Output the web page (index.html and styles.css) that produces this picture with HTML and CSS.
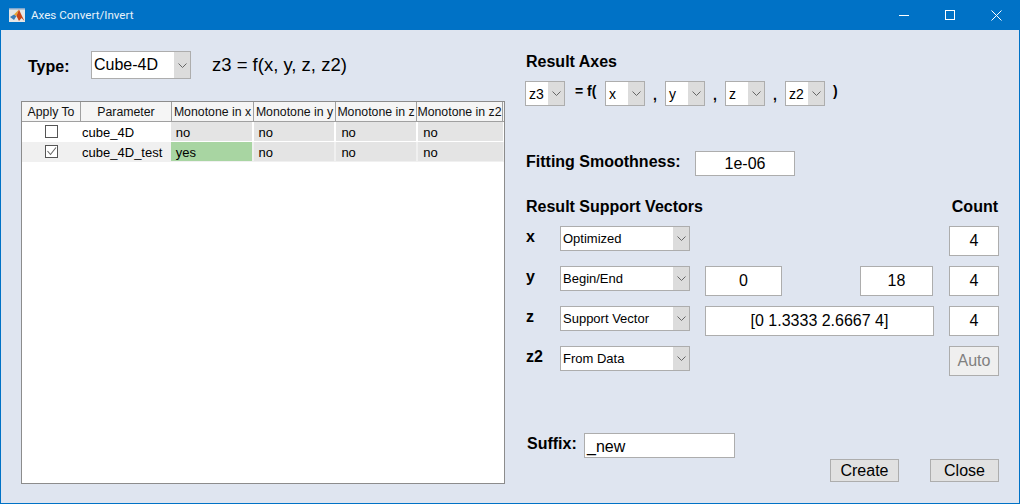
FILE: index.html
```html
<!DOCTYPE html>
<html lang="en">
<head>
    <meta charset="UTF-8">
    <title>Axes Convert/Invert</title>
    <link rel="stylesheet" href="styles.css">
</head>
<body>
    <svg class="defs" width="0" height="0">
        <symbol id="chev" viewBox="0 0 9 5">
            <path d="M0.5 0.5 L4.5 4.5 L8.5 0.5" fill="none" stroke="#666" stroke-width="1"/>
        </symbol>
    </svg>
    <div class="window">
        <div class="titlebar">
            <svg class="app-icon" width="16" height="14" viewBox="0 0 16 14">
                <rect x="0" y="0" width="16" height="14" fill="#e6e6e6"/>
                <rect x="0" y="0" width="16" height="1.5" fill="#7fa6cc"/>
                <path d="M1 9 L5 6.5 L7.5 8 L5 12 Z" fill="#3d7db8"/>
                <path d="M5 6.5 L7 4.5 L10 1.5 L7.5 8 Z" fill="#e9a52f"/>
                <path d="M10 1.5 L12 6 L15.5 13 L12.5 10 L10 13 L7.5 8 Z" fill="#c8471a"/>
            </svg>
            <span class="title-text">Axes Convert/Invert</span>
            <div class="win-btns">
                <svg width="11" height="11" viewBox="0 0 11 11"><path d="M0 5.5 H10" stroke="#fff" stroke-width="1"/></svg>
                <svg width="11" height="11" viewBox="0 0 11 11"><rect x="0.5" y="0.5" width="9" height="9" fill="none" stroke="#fff" stroke-width="1"/></svg>
                <svg width="11" height="11" viewBox="0 0 11 11"><path d="M0.5 0.5 L10.5 10.5 M10.5 0.5 L0.5 10.5" stroke="#fff" stroke-width="1"/></svg>
            </div>
        </div>

        <div class="content">
            <div class="left">
                <div class="type-row">
                    <span class="label-md type-label">Type:</span>
                    <div class="select type-select"><span>Cube-4D</span><i class="arrow"><svg width="9" height="5"><use href="#chev"/></svg></i></div>
                    <span class="formula">z3 = f(x, y, z, z2)</span>
                </div>

                <div class="table">
                    <div class="thead">
                        <div class="th col-apply">Apply To</div>
                        <div class="th col-param">Parameter</div>
                        <div class="th col-x">Monotone in x</div>
                        <div class="th col-y">Monotone in y</div>
                        <div class="th col-z">Monotone in z</div>
                        <div class="th col-z2">Monotone in z2</div>
                    </div>
                    <div class="tr">
                        <div class="td col-apply"><span class="check"></span></div>
                        <div class="td col-param">cube_4D</div>
                        <div class="td cell col-x">no</div>
                        <div class="td cell col-y">no</div>
                        <div class="td cell col-z">no</div>
                        <div class="td cell col-z2">no</div>
                    </div>
                    <div class="tr alt">
                        <div class="td col-apply"><span class="check"><svg width="13" height="13" viewBox="0 0 13 13"><path d="M2.5 6 L5.5 9.5 L11 2.5" fill="none" stroke="#666" stroke-width="1.1"/></svg></span></div>
                        <div class="td col-param">cube_4D_test</div>
                        <div class="td cell yes col-x">yes</div>
                        <div class="td cell col-y">no</div>
                        <div class="td cell col-z">no</div>
                        <div class="td cell col-z2">no</div>
                    </div>
                </div>
            </div>

            <div class="right">
                <div class="label-md">Result Axes</div>
                <div class="axes-row">
                    <div class="select sm"><span>z3</span><i class="arrow"><svg width="9" height="5"><use href="#chev"/></svg></i></div>
                    <b class="eq">= f(</b>
                    <div class="select sm"><span>x</span><i class="arrow"><svg width="9" height="5"><use href="#chev"/></svg></i></div>
                    <b class="comma">,</b>
                    <div class="select sm"><span>y</span><i class="arrow"><svg width="9" height="5"><use href="#chev"/></svg></i></div>
                    <b class="comma">,</b>
                    <div class="select sm"><span>z</span><i class="arrow"><svg width="9" height="5"><use href="#chev"/></svg></i></div>
                    <b class="comma">,</b>
                    <div class="select sm"><span>z2</span><i class="arrow"><svg width="9" height="5"><use href="#chev"/></svg></i></div>
                    <b class="paren">)</b>
                </div>

                <div class="smooth-row">
                    <span class="label-md">Fitting Smoothness:</span>
                    <div class="field smooth-field">1e-06</div>
                </div>

                <div class="support-head">
                    <span class="label-md">Result Support Vectors</span>
                    <span class="label-md count-label">Count</span>
                </div>

                <div class="sv-row">
                    <b class="axis-name">x</b>
                    <div class="select wide"><span>Optimized</span><i class="arrow"><svg width="9" height="5"><use href="#chev"/></svg></i></div>
                    <div class="field count">4</div>
                </div>
                <div class="sv-row">
                    <b class="axis-name">y</b>
                    <div class="select wide"><span>Begin/End</span><i class="arrow"><svg width="9" height="5"><use href="#chev"/></svg></i></div>
                    <div class="field begin">0</div>
                    <div class="field end">18</div>
                    <div class="field count">4</div>
                </div>
                <div class="sv-row">
                    <b class="axis-name">z</b>
                    <div class="select wide"><span>Support Vector</span><i class="arrow"><svg width="9" height="5"><use href="#chev"/></svg></i></div>
                    <div class="field vector">[0 1.3333 2.6667 4]</div>
                    <div class="field count">4</div>
                </div>
                <div class="sv-row">
                    <b class="axis-name">z2</b>
                    <div class="select wide"><span>From Data</span><i class="arrow"><svg width="9" height="5"><use href="#chev"/></svg></i></div>
                    <div class="btn auto">Auto</div>
                </div>

                <div class="suffix-row">
                    <span class="label-md">Suffix:</span>
                    <div class="field suffix-field">_new</div>
                </div>
                <div class="actions">
                    <div class="btn">Create</div>
                    <div class="btn">Close</div>
                </div>
            </div>
        </div>
    </div>
</body>
</html>
```
FILE: styles.css
```css
* {
    box-sizing: border-box;
}

body {
    margin: 0;
    font-family: "Liberation Sans", Arial, sans-serif;
    color: #000;
}

.defs {
    display: block;
    height: 0;
}

.window {
    width: 1020px;
    height: 504px;
    overflow: hidden;
    background-color: #dfe5f0;
    border: 1px solid #0072c6;
    border-top: none;
}

.titlebar {
    display: flex;
    align-items: center;
    height: 30px;
    margin: 0 -1px;
    padding-left: 9px;
    background-color: #0072c6;
    color: #e8f2fa;
    font-family: Roboto, "Noto Sans", sans-serif;
    font-size: 11.6px;
}

.title-text {
    margin-left: 6px;
}

.win-btns {
    display: flex;
    margin-left: auto;
    padding-right: 18px;
    gap: 35px;
}

.content {
    display: flex;
}

.left {
    width: 525px;
    padding-left: 20px;
}

.type-row {
    display: flex;
    align-items: flex-start;
    height: 71px;
    padding-top: 21px;
}

.type-label {
    width: 63px;
    margin-left: 7px;
    padding-top: 7px;
}

.label-md {
    font-size: 16px;
    font-weight: bold;
}

.formula {
    margin-left: 21px;
    padding-top: 3px;
    font-size: 18.5px;
}

.select {
    display: flex;
    justify-content: space-between;
    background-color: #fff;
    border: 1px solid #adadad;
    font-size: 13px;
    color: #000;
}

.select span {
    padding-left: 2px;
    align-self: center;
}

.arrow {
    display: flex;
    align-items: center;
    justify-content: center;
    width: 16px;
    background-color: #dcdcdc;
}

.type-select {
    width: 100px;
    height: 28px;
    font-size: 16px;
}

.sm {
    width: 40px;
    height: 25px;
    font-size: 14px;
}

.wide {
    width: 130px;
    height: 25px;
}

.table {
    width: 484px;
    height: 383px;
    background-color: #fff;
    border: 1px solid #8c8c8c;
    font-size: 13px;
}

.thead {
    display: flex;
    height: 20px;
    background-color: #f5f5f5;
    border-bottom: 1px solid #a0a0a0;
    color: #111;
    font-size: 12.3px;
}

.th {
    display: flex;
    align-items: center;
    justify-content: center;
    border-right: 1px solid #a0a0a0;
    white-space: nowrap;
    overflow: hidden;
}

.tr {
    display: flex;
    height: 20px;
}

.alt {
    background-color: #f0f0f0;
}

.td {
    display: flex;
    align-items: center;
    white-space: nowrap;
}

.col-apply {
    width: 59px;
    justify-content: center;
}

.col-param {
    width: 91px;
}

.td.col-param {
    padding-left: 2px;
}

.col-x,
.col-y {
    width: 82px;
}

.col-z {
    width: 81px;
}

.col-z2 {
    width: 86px;
}

.cell {
    margin: 0 1px 1px 1px;
    padding: 2px 0 0 5px;
    background-color: #e4e4e4;
}

.yes {
    background-color: #a8d5a2;
}

.check {
    display: block;
    width: 13px;
    height: 13px;
    margin-bottom: 1px;
    background-color: #fff;
    border: 1px solid #555;
    line-height: 0;
}

.check svg {
    margin: -1px;
}

.right {
    width: 474px;
    padding-top: 23px;
}

.axes-row {
    display: flex;
    align-items: flex-start;
    margin-top: 10px;
    margin-left: -1px;
    height: 25px;
}

.axes-row b {
    font-size: 14px;
}

.sm span {
    padding-left: 3px;
}

.eq {
    width: 40px;
    padding-left: 10px;
    padding-top: 2px;
}

.comma {
    width: 20px;
    padding-left: 8px;
    padding-top: 6px;
}

.paren {
    padding-left: 8px;
    padding-top: 2px;
}

.smooth-row {
    display: flex;
    align-items: center;
    margin-top: 45px;
    height: 25px;
}

.smooth-row .label-md {
    width: 169px;
    padding-bottom: 4px;
}

.field {
    display: flex;
    align-items: center;
    justify-content: center;
    background-color: #fff;
    border: 1px solid #adadad;
    font-size: 16px;
}

.smooth-field {
    width: 100px;
    height: 25px;
}

.support-head {
    display: flex;
    justify-content: space-between;
    margin-top: 22px;
    padding-right: 2px;
    height: 18px;
}

.sv-row {
    display: flex;
    align-items: flex-start;
    margin-top: 10px;
    height: 30px;
}

.axis-name {
    width: 34px;
    font-size: 16px;
    padding-top: 2px;
}

.begin {
    width: 77px;
    height: 30px;
    margin-left: 15px;
}

.end {
    width: 73px;
    height: 30px;
    margin-left: 78px;
}

.vector {
    width: 229px;
    height: 30px;
    margin-left: 15px;
}

.count {
    width: 50px;
    height: 30px;
    margin-left: auto;
    margin-right: 1px;
}

.btn {
    display: flex;
    align-items: center;
    justify-content: center;
    width: 69px;
    height: 23px;
    background-color: #e1e1e1;
    border: 1px solid #adadad;
    font-size: 16px;
}

.auto {
    width: 50px;
    height: 30px;
    margin-left: auto;
    margin-right: 1px;
    background-color: #efefef;
    color: #808080;
}

.suffix-row {
    display: flex;
    align-items: center;
    margin-top: 57px;
    padding-left: 1px;
    height: 25px;
}

.suffix-row .label-md {
    width: 57px;
    padding-bottom: 3px;
}

.suffix-field {
    justify-content: flex-start;
    width: 151px;
    height: 25px;
    padding: 2px 0 0 2px;
}

.actions {
    display: flex;
    justify-content: flex-end;
    gap: 31px;
    margin-top: 1px;
    padding-right: 1px;
}
```
